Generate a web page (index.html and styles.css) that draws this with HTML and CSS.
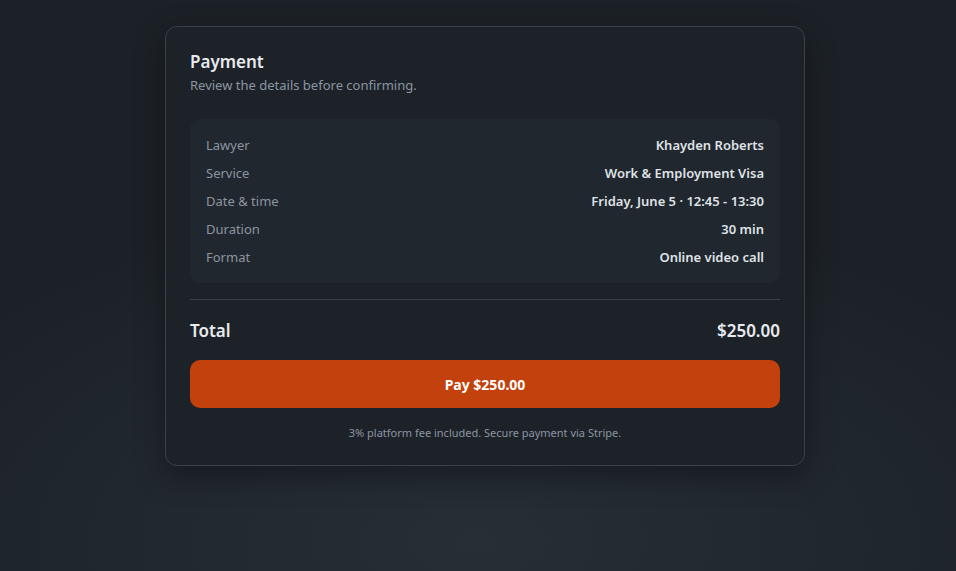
FILE: index.html
```html
<!DOCTYPE html>
<html lang="en">
<head>
    <meta charset="UTF-8">
    <meta name="viewport" content="width=device-width, initial-scale=1.0">
    <title>Payment</title>
    <link rel="stylesheet" href="styles.css">
</head>
<body>
    <div class="page">
        <div class="card">
            <div class="card-head">
                <div class="card-title">Payment</div>
                <div class="card-sub">Review the details before confirming.</div>
            </div>

            <div class="details">
                <div class="row">
                    <span class="label">Lawyer</span>
                    <span class="value">Khayden Roberts</span>
                </div>
                <div class="row">
                    <span class="label">Service</span>
                    <span class="value">Work &amp; Employment Visa</span>
                </div>
                <div class="row">
                    <span class="label">Date &amp; time</span>
                    <span class="value">Friday, June 5 · 12:45 - 13:30</span>
                </div>
                <div class="row">
                    <span class="label">Duration</span>
                    <span class="value">30 min</span>
                </div>
                <div class="row">
                    <span class="label">Format</span>
                    <span class="value">Online video call</span>
                </div>
            </div>

            <div class="total">
                <span>Total</span>
                <span>$250.00</span>
            </div>

            <button type="button" class="pay-button">Pay $250.00</button>

            <div class="fine-print">3% platform fee included. Secure payment via Stripe.</div>
        </div>
    </div>
</body>
</html>
```

FILE: styles.css
```css
* {
    margin: 0;
    padding: 0;
    box-sizing: border-box;
    font-family: 'Noto Sans', 'Open Sans', sans-serif;
}

body {
    min-height: 100vh;
    background-color: #1f252c;
    background-image: radial-gradient(ellipse 70% 60% at 50% 95%, #262e36 0%, #1f252c 70%, #1c2127 100%);
    color: #e5e7eb;
}

.page {
    display: flex;
    justify-content: center;
    padding-top: 26px;
    padding-left: 14px;
}

.card {
    width: 640px;
    padding: 23px 24px 24px;
    background-color: #1d2229;
    border: 1px solid #3a414a;
    border-radius: 12px;
    box-shadow: 0 10px 30px rgba(0, 0, 0, 0.35);
}

.card-head {
    margin-bottom: 24px;
}

.card-title {
    font-size: 17px;
    font-weight: 600;
    color: #e8eaee;
    line-height: 24px;
}

.card-sub {
    font-size: 13px;
    color: #8b95a2;
    line-height: 20px;
    margin-top: 1px;
}

.details {
    background-color: #21272e;
    border-radius: 10px;
    padding: 12px 16px;
}

.row {
    display: flex;
    justify-content: space-between;
    align-items: center;
    height: 28px;
    font-size: 13px;
}

.label {
    color: #8b95a2;
}

.value {
    color: #dfe2e7;
    font-weight: 600;
}

.total {
    display: flex;
    justify-content: space-between;
    align-items: center;
    margin-top: 16px;
    border-top: 1px solid #3a414a;
    height: 61px;
    font-size: 17px;
    font-weight: 600;
    color: #e8eaee;
}

.pay-button {
    display: block;
    width: 100%;
    height: 48px;
    background-color: #c2410c;
    color: #fff;
    border: none;
    border-radius: 10px;
    font-size: 14px;
    font-weight: 700;
    cursor: pointer;
}

.fine-print {
    text-align: center;
    font-size: 11px;
    color: #8b95a2;
    margin-top: 17px;
    line-height: 16px;
}
```
